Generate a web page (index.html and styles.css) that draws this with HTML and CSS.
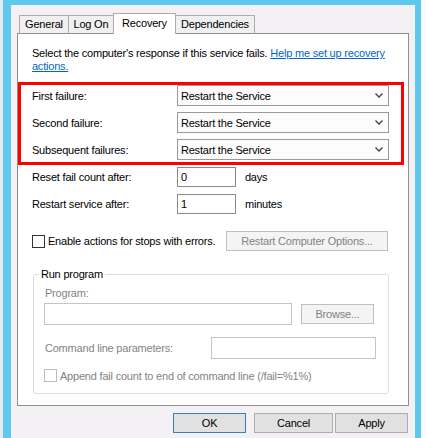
FILE: index.html
```html
<!DOCTYPE html>
<html>
<head>
<meta charset="utf-8">
<link rel="stylesheet" href="styles.css">
</head>
<body>
<div class="strip-left"></div>
<div class="frame">
  <div class="tabs">
    <div class="tab t-general">General</div>
    <div class="tab t-logon">Log On</div>
    <div class="tab tab-active t-recovery">Recovery</div>
    <div class="tab t-deps">Dependencies</div>
  </div>
  <div class="panel">
    <p class="intro">Select the computer's response if this service fails. <a class="link">Help me set up recovery<br>actions.</a></p>
    <div class="redbox">
      <div class="row-sel"><span class="lbl">First failure:</span><div class="combo"><span>Restart the Service</span><svg class="chev" width="8" height="5" viewBox="0 0 8 5"><path d="M0.5 0.5 L4 4 L7.5 0.5" fill="none" stroke="#444" stroke-width="1.4"/></svg></div></div>
      <div class="row-sel"><span class="lbl">Second failure:</span><div class="combo"><span>Restart the Service</span><svg class="chev" width="8" height="5" viewBox="0 0 8 5"><path d="M0.5 0.5 L4 4 L7.5 0.5" fill="none" stroke="#444" stroke-width="1.4"/></svg></div></div>
      <div class="row-sel"><span class="lbl">Subsequent failures:</span><div class="combo"><span>Restart the Service</span><svg class="chev" width="8" height="5" viewBox="0 0 8 5"><path d="M0.5 0.5 L4 4 L7.5 0.5" fill="none" stroke="#444" stroke-width="1.4"/></svg></div></div>
    </div>
    <div class="row-num first"><span class="lbl">Reset fail count after:</span><div class="num">0</div><span class="unit">days</span></div>
    <div class="row-num"><span class="lbl">Restart service after:</span><div class="num">1</div><span class="unit">minutes</span></div>
    <div class="row-check"><span class="cb"></span><span class="cb-lbl">Enable actions for stops with errors.</span><div class="btn btn-disabled btn-rco">Restart Computer Options...</div></div>
    <fieldset class="group">
      <legend>Run program</legend>
      <div class="dis-lbl prog-lbl">Program:</div>
      <div class="prog-row"><div class="dis-input prog-input"></div><div class="btn btn-disabled btn-browse">Browse...</div></div>
      <div class="cmd-row"><span class="dis-lbl">Command line parameters:</span><div class="dis-input cmd-input"></div></div>
      <div class="append-row"><span class="cb cb-dis"></span><span class="dis-lbl">Append fail count to end of command line (/fail=%1%)</span></div>
    </fieldset>
  </div>
  <div class="buttons">
    <div class="btn btn-ok">OK</div>
    <div class="btn btn-cancel">Cancel</div>
    <div class="btn btn-apply">Apply</div>
  </div>
</div>
<div class="strip-right"></div>
</body>
</html>
```
FILE: styles.css
```css
html, body {
  margin: 0;
  padding: 0;
}
body {
  width: 426px;
  height: 438px;
  display: flex;
  overflow: hidden;
  font-family: "Liberation Sans", Arial, sans-serif;
  font-size: 11px;
  letter-spacing: -0.2px;
  color: #000;
  background: #fff;
}
.strip-left {
  width: 3px;
  background: #e4e9ef;
}
.strip-right {
  width: 5px;
  background: #fbfbfb;
}
.frame {
  width: 404px;
  border-left: 8px solid #5fc8ef;
  border-right: 6px solid #5fc8ef;
  border-top: 5px solid #5fc8ef;
  background: #f4f1f5;
  padding: 8px 0 0 6px;
  box-sizing: content-box;
}
.tabs {
  display: flex;
  align-items: flex-end;
  height: 20px;
  padding-left: 2px;
  position: relative;
  z-index: 1;
}
.tab {
  box-sizing: border-box;
  height: 18px;
  border: 1px solid #acacac;
  border-bottom: none;
  background: #f0f0f0;
  display: flex;
  align-items: center;
  justify-content: center;
  margin-left: -1px;
  padding-bottom: 1px;
}
.t-general { width: 50px; margin-left: 0; }
.t-logon { width: 46px; }
.t-recovery { width: 63px; }
.t-deps { width: 80px; }
.tab-active {
  height: 21px;
  margin-bottom: -1px;
  background: #fff;
  position: relative;
  z-index: 2;
  padding-bottom: 3px;
}
.panel {
  box-sizing: border-box;
  width: 392px;
  height: 373px;
  border: 1px solid #8f8f8f;
  background: #fff;
}
.intro {
  margin: 0;
  padding: 13px 0 0 14px;
  line-height: 13px;
}
.link {
  color: #0066cc;
  text-decoration: underline;
}
.redbox {
  margin: 9px 4px 0 0;
  border: 3px solid #ff0000;
  padding: 0 11px 2px 11px;
  display: flex;
  flex-direction: column;
  gap: 6px;
}
.row-sel {
  display: flex;
  align-items: center;
  height: 21px;
}
.lbl {
  width: 145px;
  flex: none;
}
.combo {
  box-sizing: border-box;
  width: 212px;
  height: 21px;
  border: 1px solid #9a9a9a;
  background: #fcfcfc;
  display: flex;
  align-items: center;
  justify-content: space-between;
  padding: 0 5px 0 3px;
}
.chev {
  display: block;
}
.row-num {
  display: flex;
  align-items: center;
  padding-left: 14px;
  margin-top: 7px;
  height: 20px;
}
.row-num.first {
  margin-top: 2px;
}
.num {
  box-sizing: border-box;
  width: 59px;
  height: 20px;
  border: 1px solid #8a8a8a;
  padding: 0 3px;
  line-height: 18px;
}
.unit {
  margin-left: 9px;
}
.row-check {
  display: flex;
  align-items: center;
  padding-left: 14px;
  margin-top: 17px;
  height: 20px;
}
.cb {
  box-sizing: border-box;
  width: 13px;
  height: 13px;
  border: 1px solid #333;
  background: #fff;
  flex: none;
}
.cb-dis {
  border-color: #bcbcbc;
}
.cb-lbl {
  margin-left: 3px;
}
.btn {
  box-sizing: border-box;
  height: 20px;
  border: 1px solid #adadad;
  background: #e1e1e1;
  display: flex;
  align-items: center;
  justify-content: center;
}
.btn-disabled {
  background: #f4f4f4;
  border-color: #bfbfbf;
  color: #838383;
}
.btn-rco {
  width: 162px;
  margin-left: auto;
  margin-right: 20px;
}
.group {
  margin: 17px 0 0 15px;
  width: 356px;
  box-sizing: border-box;
  border: 1px solid #d5dfe5;
  border-radius: 3px;
  padding: 0 0 11px 11px;
  min-width: 0;
}
.group legend {
  padding: 0 2px;
  margin-left: -6px;
  line-height: 13px;
  color: #000;
}
.dis-lbl {
  color: #838383;
}
.prog-lbl {
  margin-top: 6px;
  line-height: 13px;
}
.prog-row {
  display: flex;
  align-items: center;
  margin-top: 3px;
  margin-left: -1px;
}
.dis-input {
  box-sizing: border-box;
  height: 22px;
  border: 1px solid #c4c4c4;
  background: #fff;
}
.prog-input {
  width: 248px;
}
.btn-browse {
  width: 73px;
  margin-left: 9px;
}
.cmd-row {
  display: flex;
  align-items: center;
  justify-content: space-between;
  margin-top: 12px;
  margin-right: 12px;
}
.cmd-input {
  width: 165px;
}
.append-row {
  display: flex;
  align-items: center;
  margin-top: 10px;
  margin-left: -1px;
  height: 13px;
  gap: 3px;
}
.buttons {
  display: flex;
  justify-content: flex-end;
  margin-top: 7px;
  padding-right: 7px;
}
.btn-ok {
  width: 73px;
  border-color: #3c7fb1;
}
.btn-cancel {
  width: 79px;
  margin-left: 8px;
}
.btn-apply {
  width: 73px;
  margin-left: 2px;
}
```
